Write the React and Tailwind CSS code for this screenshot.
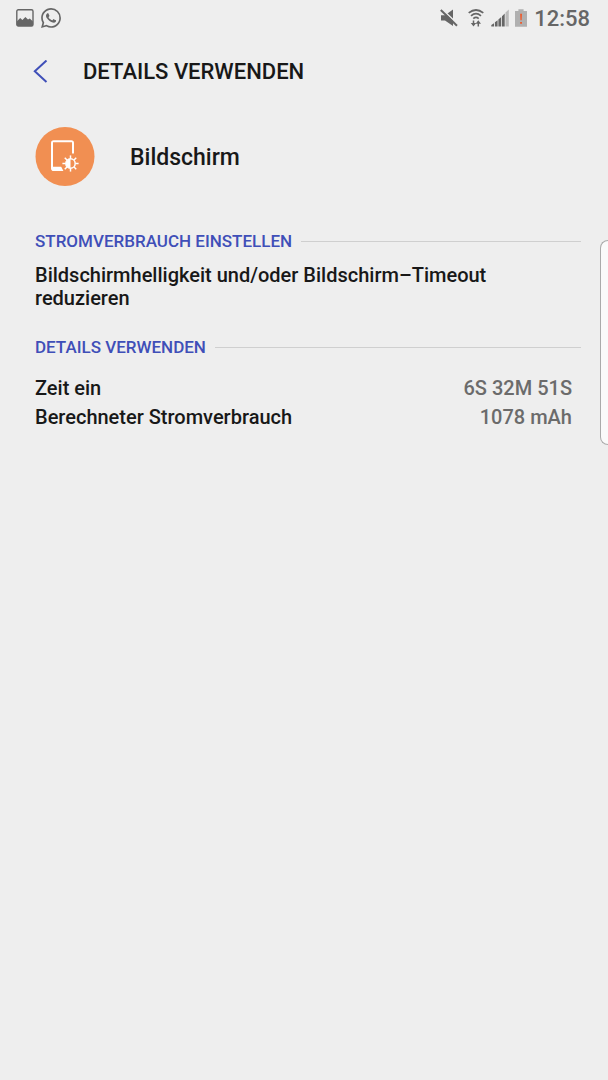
import React from "react";

function ImageIcon() {
  return (
    <svg viewBox="0 0 18 18" className="h-[18px] w-[18px]" aria-hidden="true">
      <rect x="0.8" y="0.8" width="16.2" height="16.2" rx="1.5" fill="none" stroke="#666" strokeWidth="1.4" />
      <path d="M1 12.2 L4.2 9 L6.4 11 L9.4 8 L12 10.6 L13.8 9.4 L17 12.4 V17 H1Z" fill="#666" />
    </svg>
  );
}

function ChatIcon() {
  return (
    <svg viewBox="0 0 24 24" className="h-5 w-5" fill="#666" aria-hidden="true">
      <path d="M17.472 14.382c-.297-.149-1.758-.867-2.03-.967-.273-.099-.471-.148-.67.15-.197.297-.767.966-.94 1.164-.173.199-.347.223-.644.075-.297-.15-1.255-.463-2.39-1.475-.883-.788-1.48-1.761-1.653-2.059-.173-.297-.018-.458.13-.606.134-.133.298-.347.446-.52.149-.174.198-.298.298-.497.099-.198.05-.371-.025-.52-.075-.149-.669-1.612-.916-2.207-.242-.579-.487-.5-.669-.51-.173-.008-.371-.01-.57-.01-.198 0-.52.074-.792.372-.272.297-1.04 1.016-1.04 2.479 0 1.462 1.065 2.875 1.213 3.074.149.198 2.096 3.2 5.077 4.487.709.306 1.262.489 1.694.625.712.227 1.36.195 1.871.118.571-.085 1.758-.719 2.006-1.413.248-.694.248-1.289.173-1.413-.074-.124-.272-.198-.57-.347m-5.421 7.403h-.004a9.87 9.87 0 01-5.031-1.378l-.361-.214-3.741.982.998-3.648-.235-.374a9.86 9.86 0 01-1.51-5.26c.001-5.45 4.436-9.884 9.888-9.884 2.64 0 5.122 1.03 6.988 2.898a9.825 9.825 0 012.893 6.994c-.003 5.45-4.437 9.884-9.885 9.884m8.413-18.297A11.815 11.815 0 0012.05 0C5.495 0 .16 5.335.157 11.892c0 2.096.547 4.142 1.588 5.945L.057 24l6.305-1.654a11.882 11.882 0 005.683 1.448h.005c6.554 0 11.89-5.335 11.893-11.893a11.821 11.821 0 00-3.48-8.413z" />
    </svg>
  );
}

function MuteIcon() {
  return (
    <svg viewBox="0 0 18 18" className="h-[18px] w-[18px]" aria-hidden="true">
      <path d="M1 6.2H5L13 0.5V17L5 11.6H1Z" fill="#666" />
      <path d="M1.2 -0.6 L18 15.4" stroke="#eee" strokeWidth="1.6" />
      <path d="M0.8 1 L17 16.8" stroke="#666" strokeWidth="2" />
    </svg>
  );
}

function WifiIcon() {
  return (
    <svg viewBox="0 0 16 18" className="h-[18px] w-4" fill="none" stroke="#666" aria-hidden="true">
      <path d="M0.7 3.9 Q8 -1.9 15.3 3.9 M3 6.8 Q8 2.6 13 6.8 M5.3 9.6 Q8 7.2 10.7 9.6" strokeWidth="1.7" />
      <path d="M5.5 11.6V16 M10.3 13V17.4" strokeWidth="1.5" />
      <path d="M2.8 14H8.2L5.5 17.6Z M7.6 14.8H13L10.3 11.2Z" fill="#666" stroke="none" />
    </svg>
  );
}

function SignalIcon() {
  return (
    <svg viewBox="0 0 18 18" className="h-[18px] w-[18px]" fill="#666" aria-hidden="true">
      <path d="M0.3 17.5V15.9L3 14.2V17.5Z M3.9 17.5V13.2L6.6 11.2V17.5Z M7.4 17.5V10.4L10.2 8V17.5Z M11 17.5V7.2L13.7 4.6V17.5Z" />
      <path d="M14.5 17.5V3.6L17.8 0.4V17.5Z" fill="#bbb" />
    </svg>
  );
}

function BatteryIcon() {
  return (
    <svg viewBox="0 0 12 18" className="h-[18px] w-3" aria-hidden="true">
      <path d="M3.4 0.3H8.6V2H12V17.7H0V2H3.4Z" fill="#b0b0b0" />
      <path d="M5.2 4.8H6.9L6.6 11.3H5.5Z M5.2 13H6.9V14.7H5.2Z" fill="#f4511e" />
    </svg>
  );
}

function ScreenIcon() {
  const rays = [0, 45, 90, 135, 180, 225, 270, 315];
  return (
    <svg viewBox="0 0 60 60" className="h-[60px] w-[60px] shrink-0" aria-hidden="true">
      <circle cx="30" cy="30.4" r="29.5" fill="#f18f52" />
      <path d="M39 27.5V17Q39 14.2 36.2 14.2H18.8Q16 14.2 16 17V42.2Q16 45 18.8 45H28.4L26.2 40.8H18V16.2H37V27.5Z" fill="#fff" />
      <g stroke="#fff" strokeWidth="1.5">
        <circle cx="35.5" cy="37.5" r="4.7" fill="none" />
        <path d="M35.5 32.8A4.7 4.7 0 0 0 35.5 42.2Z" fill="#fff" stroke="none" />
        {rays.map((angle) => (
          <path key={angle} d="M35.5 32.5V29.4" transform={`rotate(${angle} 35.5 37.5)`} />
        ))}
      </g>
    </svg>
  );
}

function Section({ title, children }) {
  return (
    <section>
      <div className="flex items-center gap-[9px] pr-[27px]">
        <h2 className="text-[17px] leading-6 text-[#3f4fb8]">{title}</h2>
        <div className="h-px flex-1 bg-[#cfcfcf]" />
      </div>
      {children}
    </section>
  );
}

function Detail({ label, value }) {
  return (
    <div className="flex justify-between leading-[29px]">
      <dt>{label}</dt>
      <dd className="text-[#6b6b6b]">{value}</dd>
    </div>
  );
}

export default function App() {
  return (
    <div className="relative min-h-screen bg-[#eee] font-['Roboto',sans-serif] text-xl font-medium text-[#181818]">
      <div className="flex h-9 items-center justify-between pr-[18px] pl-4 text-[#666]">
        <div className="flex items-center gap-[7px]">
          <ImageIcon />
          <ChatIcon />
        </div>
        <div className="flex items-center">
          <MuteIcon />
          <span className="ml-[10px]"><WifiIcon /></span>
          <span className="ml-[7px]"><SignalIcon /></span>
          <span className="ml-[6px]"><BatteryIcon /></span>
          <time className="ml-[7px] pt-px text-[22px] leading-9">12:58</time>
        </div>
      </div>

      <header className="flex h-[72px] items-center pl-7">
        <button type="button" aria-label="Zurück" className="flex h-10 w-[55px] items-center pl-[5px]">
          <svg viewBox="0 0 16 24" className="h-6 w-4" fill="none" stroke="#3f4fb8" strokeWidth="2" aria-hidden="true">
            <path d="M13.5 0.5 L1.8 11.3 L13.5 22" />
          </svg>
        </button>
        <h1 className="text-[22px] leading-8">DETAILS VERWENDEN</h1>
      </header>

      <main className="pl-[35px]">
        <div className="flex items-center gap-[35px] pt-[18px] pb-[43px]">
          <ScreenIcon />
          <p className="pt-1 text-[23px] leading-8">Bildschirm</p>
        </div>

        <Section title="STROMVERBRAUCH EINSTELLEN">
          <p className="max-w-[500px] pt-[11px] pb-[25px] leading-[23px]">
            Bildschirmhelligkeit und/oder Bildschirm–Timeout reduzieren
          </p>
        </Section>

        <Section title="DETAILS VERWENDEN">
          <dl className="pt-[15px] pr-9">
            <Detail label="Zeit ein" value="6S 32M 51S" />
            <Detail label="Berechneter Stromverbrauch" value="1078 mAh" />
          </dl>
        </Section>
      </main>

      <div className="absolute top-[240px] right-0 h-[205px] w-[8px] rounded-l-[8px] border border-r-0 border-[#aaa] bg-[#fafafa]" />
    </div>
  );
}
